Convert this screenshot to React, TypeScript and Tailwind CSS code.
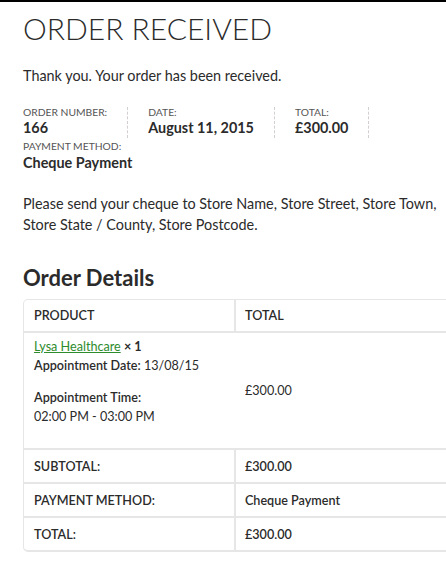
const overview = [
  { label: "Order Number:", value: "166" },
  { label: "Date:", value: "August 11, 2015" },
  { label: "Total:", value: "£300.00" },
  { label: "Payment Method:", value: "Cheque Payment" },
];

const totals = [
  { label: "Subtotal:", value: "£300.00" },
  { label: "Payment Method:", value: "Cheque Payment" },
  { label: "Total:", value: "£300.00" },
];

export default function App() {
  return (
    <div className="w-[446px] h-[571px] overflow-hidden bg-white font-['Lato',sans-serif] text-[#2b2b2b]">
      <div className="h-[2px] bg-black" />
      <div className="ml-[23px] w-[440px]">
        <h1 className="mt-[8px] text-[30px] font-light leading-[1.2] uppercase">Order Received</h1>
        <p className="mt-[19px] text-[14.4px] leading-[21px]">Thank you. Your order has been received.</p>

        {/* order overview */}
        <ul className="mt-[21px] flex flex-wrap gap-y-[3px]">
          {overview.map((item, index) => (
            <li
              key={index}
              className={
                index < overview.length - 1
                  ? "mr-[20px] pr-[20px] border-r border-dashed border-[#d3ced2]"
                  : ""
              }
            >
              <div className="text-[10.3px] leading-none uppercase text-[#555]">{item.label}</div>
              <strong className="block text-[14.4px] leading-[21px] font-bold">{item.value}</strong>
            </li>
          ))}
        </ul>

        <p className="mt-[20px] w-[420px] text-[14.4px] leading-[21px]">
          Please send your cheque to Store Name, Store Street, Store Town, Store State / County, Store Postcode.
        </p>

        <h2 className="mt-[30px] text-[22px] font-bold leading-[1.2]">Order Details</h2>

        {/* order table */}
        <table className="mt-[8px] w-[440px] border-separate border-spacing-0 text-[12.6px] leading-[19px] text-left">
          <thead>
            <tr>
              <th className="w-[213px] px-[10px] py-[6px] font-semibold uppercase border-t border-l border-b-2 border-r-2 border-[#e6e6e6] rounded-tl-[5px]">
                Product
              </th>
              <th className="px-[9px] py-[6px] font-semibold uppercase border-t border-b-2 border-[#e6e6e6]">
                Total
              </th>
            </tr>
          </thead>
          <tbody>
            <tr>
              <td className="px-[10px] pt-[4px] pb-[22px] border-l border-[#e6e6e6] align-top">
                <div>
                  <a href="#" className="text-[#2e8b2e] underline">Lysa Healthcare</a>{" "}
                  <strong className="font-bold">× 1</strong>
                </div>
                <div>
                  <span className="font-semibold">Appointment Date:</span> 13/08/15
                </div>
                <div className="mt-[13px] font-semibold">Appointment Time:</div>
                <div>02:00 PM - 03:00 PM</div>
              </td>
              <td className="px-[9px] align-middle">£300.00</td>
            </tr>
          </tbody>
          <tfoot>
            {totals.map((row, index) => (
              <tr key={index}>
                <th
                  className={
                    "px-[10px] pt-[7px] pb-[6px] font-semibold uppercase border-t-2 border-l border-r-2 border-[#e6e6e6]" +
                    (index === totals.length - 1 ? " border-b-2 rounded-bl-[5px]" : "")
                  }
                >
                  {row.label}
                </th>
                <td
                  className={
                    "px-[9px] pt-[7px] pb-[6px] font-semibold border-t-2 border-[#e6e6e6]" +
                    (index === totals.length - 1 ? " border-b-2" : "")
                  }
                >
                  {row.value}
                </td>
              </tr>
            ))}
          </tfoot>
        </table>
      </div>
    </div>
  );
}
